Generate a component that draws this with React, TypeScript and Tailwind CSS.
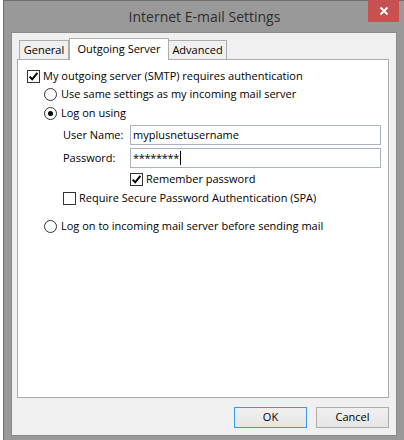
import React from "react";

const font = "font-['Open_Sans',_'Noto_Sans',_sans-serif]";

function Check({ checked }: { checked?: boolean }) {
  return (
    <div className="w-[13px] h-[13px] shrink-0 border border-[#333333] bg-white flex items-center justify-center">
      {checked && (
        <svg width="11" height="11" viewBox="0 0 11 11">
          <path d="M1.6 5.6 L4.2 8.3 L9.4 1.8" fill="none" stroke="#000" strokeWidth="2" />
        </svg>
      )}
    </div>
  );
}

function Radio({ checked }: { checked?: boolean }) {
  return (
    <div className="w-[13px] h-[13px] shrink-0 rounded-full border border-[#333333] bg-white flex items-center justify-center">
      {checked && <div className="w-[5px] h-[5px] rounded-full bg-black" />}
    </div>
  );
}

export default function App() {
  return (
    <div className={`w-[404px] h-[440px] overflow-hidden bg-white ${font} text-[11px] text-black`}>
      <div className="ml-[3px] w-[401px] h-[440px] bg-[#999999] border-l border-t border-[#6e6e6e]">
        {/* title bar */}
        <div className="relative h-[31px] flex items-center justify-center">
          <span className="text-[14px] text-[#2e2e2e] leading-none pl-[1px] pt-[1px]">Internet E-mail Settings</span>
          <div className="absolute right-[5px] top-[-1px] w-[31px] h-[22px] bg-[#c75050] flex items-center justify-center">
            <svg width="10" height="10" viewBox="0 0 10 10">
              <path d="M1.5 1.5 L8.5 8.5 M8.5 1.5 L1.5 8.5" stroke="#fff" strokeWidth="2" />
            </svg>
          </div>
        </div>
        {/* client */}
        <div className="ml-[7px] w-[386px] h-[404px] bg-[#f0f0f0] border border-[#8a8a8a] pt-[5px] pl-[5px] pr-[7px] pb-[7px] flex flex-col">
          {/* tabs */}
          <div className="flex items-end h-[21px] pl-[2px] relative z-10">
            <div className="w-[50px] h-[19px] border border-b-0 border-[#acacac] bg-[#f0f0f0] flex items-center justify-center pt-[1px]">General</div>
            <div className="w-[100px] h-[22px] mb-[-1px] border border-b-0 border-[#acacac] bg-white flex items-center justify-center pb-[1px]">Outgoing Server</div>
            <div className="w-[58px] h-[19px] border border-b-0 border-l-0 border-[#acacac] bg-[#f0f0f0] flex items-center justify-center pt-[1px]">Advanced</div>
          </div>
          {/* panel */}
          <div className="w-[372px] h-[339px] border border-[#acacac] bg-white pt-[10px] pl-[9px] flex flex-col">
            <div className="flex items-center h-[13px] gap-[3px]">
              <Check checked />
              <span>My outgoing server (SMTP) requires authentication</span>
            </div>
            <div className="flex items-center h-[13px] gap-[4px] ml-[17px] mt-[5px]">
              <Radio />
              <span>Use same settings as my incoming mail server</span>
            </div>
            <div className="flex items-center h-[13px] gap-[4px] ml-[17px] mt-[6px]">
              <Radio checked />
              <span>Log on using</span>
            </div>
            <div className="flex items-center h-[20px] ml-[36px] mt-[5px]">
              <span className="w-[67px]">User Name:</span>
              <div className="w-[251px] h-[20px] border border-[#a9b4c2] bg-white flex items-center pl-[2px]">myplusnetusername</div>
            </div>
            <div className="flex items-center h-[20px] ml-[36px] mt-[3px]">
              <span className="w-[67px]">Password:</span>
              <div className="w-[251px] h-[20px] border border-[#a9b4c2] bg-white flex items-center pl-[2px]">
                <span className="tracking-[-0.3px]">********</span>
                <span className="w-[1px] h-[14px] bg-black ml-[1px]" />
              </div>
            </div>
            <div className="flex items-center h-[13px] gap-[3px] ml-[103px] mt-[5px]">
              <Check checked />
              <span>Remember password</span>
            </div>
            <div className="flex items-center h-[13px] gap-[3px] ml-[36px] mt-[6px]">
              <Check />
              <span>Require Secure Password Authentication (SPA)</span>
            </div>
            <div className="flex items-center h-[13px] gap-[4px] ml-[17px] mt-[15px]">
              <Radio />
              <span>Log on to incoming mail server before sending mail</span>
            </div>
          </div>
          {/* buttons */}
          <div className="flex justify-end gap-[9px] mt-[9px]">
            <div className="w-[73px] h-[21px] border border-[#3399ff] bg-gradient-to-b from-[#f0f0f0] to-[#e5e5e5] flex items-center justify-center">OK</div>
            <div className="w-[73px] h-[21px] border border-[#acacac] bg-gradient-to-b from-[#f0f0f0] to-[#e5e5e5] flex items-center justify-center">Cancel</div>
          </div>
        </div>
      </div>
    </div>
  );
}
